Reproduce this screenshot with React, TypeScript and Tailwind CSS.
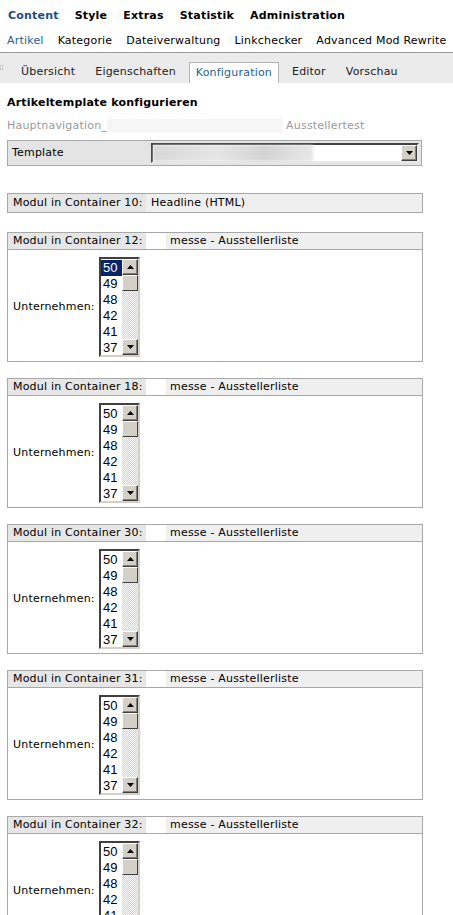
import React from "react";

const font = "font-['Verdana','DejaVu_Sans',sans-serif] tracking-[0.2px]";

const topNav = ["Content", "Style", "Extras", "Statistik", "Administration"];
const subNav = ["Artikel", "Kategorie", "Dateiverwaltung", "Linkchecker", "Advanced Mod Rewrite"];
const tabs = ["Übersicht", "Eigenschaften", "Konfiguration", "Editor", "Vorschau"];
const containers = [12, 18, 30, 31, 32];
const companies = ["50", "49", "48", "42", "41", "37"];

function Arrow({ up }: { up?: boolean }) {
  return (
    <div className="flex h-[16px] w-[16px] items-center justify-center border border-t-white border-l-white border-r-[#404040] border-b-[#404040] bg-[#d4d0c8] shadow-[inset_-1px_-1px_0_#808080]">
      <svg width="7" height="4" viewBox="0 0 7 4">
        {up ? <path d="M3.5 0 L7 4 L0 4 Z" fill="#000" /> : <path d="M0 0 L7 0 L3.5 4 Z" fill="#000" />}
      </svg>
    </div>
  );
}

function ListBox({ selected }: { selected?: boolean }) {
  return (
    <div className="flex h-[100px] w-[41px] border-2 border-t-[#404040] border-l-[#404040] border-r-[#d4d0c8] border-b-[#d4d0c8] bg-white">
      <div className="flex-1 pt-[1px] font-['Liberation_Sans',Arial,sans-serif] text-[13px] leading-[16px] tracking-normal text-black">
        {companies.map((c, i) => (
          <div key={c} className={`pl-[2px] ${selected && i === 0 ? "bg-[#0a246a] text-white" : ""}`}>
            {c}
          </div>
        ))}
      </div>
      <div className="flex w-[16px] flex-col">
        <Arrow up />
        <div className="h-[16px] border border-t-white border-l-white border-r-[#404040] border-b-[#404040] bg-[#d4d0c8]" />
        <div className="flex-1 bg-[repeating-conic-gradient(#ffffff_0_25%,#d4d0c8_0_50%)] bg-[length:2px_2px]" />
        <Arrow />
      </div>
    </div>
  );
}

function ModuleBox({ nr, selected }: { nr: number; selected?: boolean }) {
  return (
    <div className="mx-[7px] w-[416px] border border-[#a8a8a8]">
      <div className="flex h-[17px] items-center border-b border-[#a8a8a8] bg-[#efefef]">
        <div className="flex h-full w-[138px] items-center bg-[#e6e6e6] pl-[5px]">Modul in Container {nr}:</div>
        <div className="h-full w-[20px] bg-white" />
        <span className="pl-[4px]">messe - Ausstellerliste</span>
      </div>
      <div className="flex h-[111px] items-start bg-white pl-[5px] pt-[7px]">
        <span className="w-[86px] self-center pb-[3px]">Unternehmen:</span>
        <ListBox selected={selected} />
      </div>
    </div>
  );
}

export default function App() {
  return (
    <div className={`${font} min-h-[915px] w-[453px] overflow-hidden bg-white text-[11px] text-black`}>
      <div className="flex h-[30px] items-center gap-[16px] pl-[8px] pt-[2px] font-bold tracking-[0.2px]">
        {topNav.map((n, i) => (
          <span key={n} className={i === 0 ? "text-[#1d4f7e]" : ""}>
            {n}
          </span>
        ))}
      </div>
      <div className="flex h-[22px] items-center gap-[14px] whitespace-nowrap pl-[7px]">
        {subNav.map((n, i) => (
          <span key={n} className={i === 0 ? "text-[#1d5f95]" : ""}>
            {n}
          </span>
        ))}
      </div>
      <div className="relative flex h-[31px] items-end gap-[6px] border-t border-[#9a9a9a] bg-[#ebebeb] pl-[14px]">
        <div className="absolute left-0 top-[12px] h-[5px] w-[3px] border border-[#c8c8c8] bg-white" />
        {tabs.map((t, i) =>
          i === 2 ? (
            <div
              key={t}
              className="flex h-[21px] items-center border border-b-0 border-[#b4b4b4] bg-white px-[6px] text-[#1d5f95]"
            >
              {t}
            </div>
          ) : (
            <div key={t} className="flex h-[21px] items-center px-[7px] text-[#222]">
              {t}
            </div>
          ),
        )}
      </div>
      <div className="px-[7px] pt-[12px] text-[11px] font-bold">Artikeltemplate konfigurieren</div>
      <div className="mt-[6px] flex items-center px-[7px] text-[#9a9a9a]">
        <span>Hauptnavigation_</span>
        <span className="h-[14px] w-[176px] bg-[#f6f6f6]" />
        <span className="pl-[3px]">Ausstellertest</span>
      </div>
      <div className="mx-[7px] mt-[6px] flex h-[26px] w-[415px] items-center border border-[#a8a8a8] bg-[#e4e4e4] pl-[4px]">
        <span className="w-[139px]">Template</span>
        <div className="flex h-[20px] w-[268px] items-center border-2 border-t-[#404040] border-l-[#404040] border-r-[#e8e8e8] border-b-[#e8e8e8] bg-white">
          <div className="h-full w-[160px] bg-[linear-gradient(90deg,#d8d8d8,#e6e6e6_40%,#d4d4d4_70%,#e8e8e8)] blur-[1px]" />
          <div className="flex-1" />
          <Arrow />
        </div>
      </div>
      <div className="mx-[7px] mt-[27px] flex h-[20px] w-[416px] items-center border border-[#a8a8a8] bg-[#efefef]">
        <div className="flex h-full w-[138px] items-center bg-[#e6e6e6] pl-[5px]">Modul in Container 10:</div>
        <span className="pl-[5px]">Headline (HTML)</span>
      </div>
      <div className="mt-[19px] flex flex-col gap-[16px]">
        {containers.map((c, i) => (
          <ModuleBox key={c} nr={c} selected={i === 0} />
        ))}
      </div>
    </div>
  );
}
